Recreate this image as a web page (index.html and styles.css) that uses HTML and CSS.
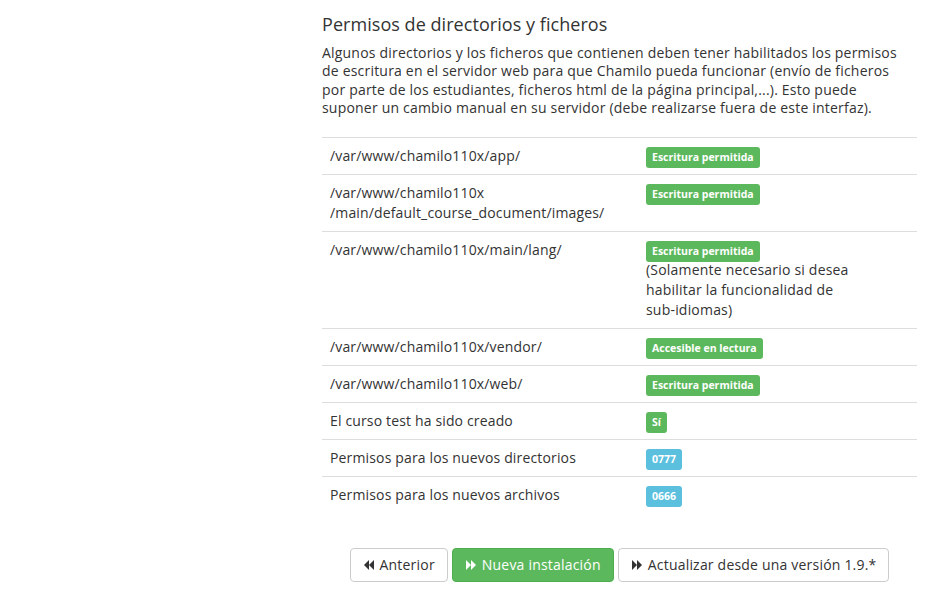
FILE: index.html
```html
<!DOCTYPE html>
<html lang="es">
<head>
<meta charset="utf-8">
<title>Permisos de directorios y ficheros</title>
<link rel="stylesheet" href="styles.css">
</head>
<body>
<div class="page">
  <div class="side"></div>
  <main class="main">
    <h3 class="title">Permisos de directorios y ficheros</h3>
    <p class="intro">Algunos directorios y los ficheros que contienen deben tener habilitados los permisos de escritura en el servidor web para que Chamilo pueda funcionar (envío de ficheros por parte de los estudiantes, ficheros html de la página principal,...). Esto puede suponer un cambio manual en su servidor (debe realizarse fuera de este interfaz).</p>
    <table class="checks">
      <tr><td class="c1">/var/www/chamilo110x/app/</td><td class="c2"><span class="label ok">Escritura permitida</span></td></tr>
      <tr><td class="c1">/var/www/chamilo110x<br>/main/default_course_document/images/</td><td class="c2"><span class="label ok">Escritura permitida</span></td></tr>
      <tr><td class="c1">/var/www/chamilo110x/main/lang/</td><td class="c2"><span class="label ok">Escritura permitida</span><div class="note">(Solamente necesario si desea habilitar la funcionalidad de <span class="nowrap">sub-idiomas)</span></div></td></tr>
      <tr><td class="c1">/var/www/chamilo110x/vendor/</td><td class="c2"><span class="label ok">Accesible en lectura</span></td></tr>
      <tr><td class="c1">/var/www/chamilo110x/web/</td><td class="c2"><span class="label ok">Escritura permitida</span></td></tr>
      <tr><td class="c1">El curso test ha sido creado</td><td class="c2"><span class="label ok">Sí</span></td></tr>
      <tr><td class="c1">Permisos para los nuevos directorios</td><td class="c2"><span class="label info">0777</span></td></tr>
      <tr><td class="c1">Permisos para los nuevos archivos</td><td class="c2"><span class="label info">0666</span></td></tr>
    </table>
    <div class="actions">
      <button class="btn btn-default" type="button"><svg class="ico" viewBox="0 0 10 10" aria-hidden="true"><polygon points="5,0 0,5 5,10"/><polygon points="10,0 5,5 10,10"/></svg>Anterior</button>
      <button class="btn btn-success" type="button"><svg class="ico" viewBox="0 0 10 10" aria-hidden="true"><polygon points="0,0 5,5 0,10"/><polygon points="5,0 10,5 5,10"/></svg>Nueva instalación</button>
      <button class="btn btn-default" type="button"><svg class="ico" viewBox="0 0 10 10" aria-hidden="true"><polygon points="0,0 5,5 0,10"/><polygon points="5,0 10,5 5,10"/></svg>Actualizar desde una versión 1.9.*</button>
    </div>
  </main>
</div>
</body>
</html>
```

FILE: styles.css
```css
* { box-sizing: border-box; }
html, body { margin: 0; padding: 0; background: #fff; }
body {
  font-family: "Open Sans", "Noto Sans", "DejaVu Sans", sans-serif;
  font-size: 14px;
  line-height: 20px;
  letter-spacing: 0.2px;
  color: #333;
}
.page { display: flex; width: 928px; }
.side { width: 322px; flex: none; }
.main { width: 595px; flex: none; padding-top: 14px; }
.title {
  margin: 0 0 10px;
  font-size: 18px;
  font-weight: 400;
  line-height: 20px;
  letter-spacing: 0.05px;
  color: #333;
}
.intro {
  margin: 0 0 20px;
  padding-right: 10px;
  line-height: 18.3px;
}
.checks {
  width: 100%;
  border-collapse: collapse;
  border-spacing: 0;
}
.checks td {
  border-top: 1px solid #ddd;
  padding: 8px;
  vertical-align: top;
  line-height: 20px;
}
.checks .c1 { width: 316px; letter-spacing: 0.15px; }
.note { max-width: 215px; }
.nowrap { white-space: nowrap; }
.label {
  display: inline-block;
  font-size: 10.5px;
  font-weight: 700;
  line-height: 13px;
  letter-spacing: 0;
  padding: 4px 6px 4px;
  margin-top: 1px;
  margin-bottom: -2px;
  vertical-align: top;
  color: #fff;
  border-radius: 3px;
  white-space: nowrap;
}
.label.ok { background: #5cb85c; }
.label.info { background: #5bc0de; }
.actions {
  display: flex;
  justify-content: center;
  gap: 4px;
  margin-top: 35px;
}
.btn {
  display: inline-flex;
  align-items: center;
  font-family: inherit;
  font-size: 14px;
  line-height: 20px;
  letter-spacing: 0.2px;
  padding: 6px 12px;
  border: 1px solid #ccc;
  border-radius: 4px;
  background: #fff;
  color: #333;
  cursor: pointer;
}
.btn-success {
  background: #5cb85c;
  border-color: #4cae4c;
  color: #fff;
}
.ico {
  width: 10px;
  height: 10px;
  margin-left: 1px;
  margin-right: 6px;
  fill: currentColor;
}
```
